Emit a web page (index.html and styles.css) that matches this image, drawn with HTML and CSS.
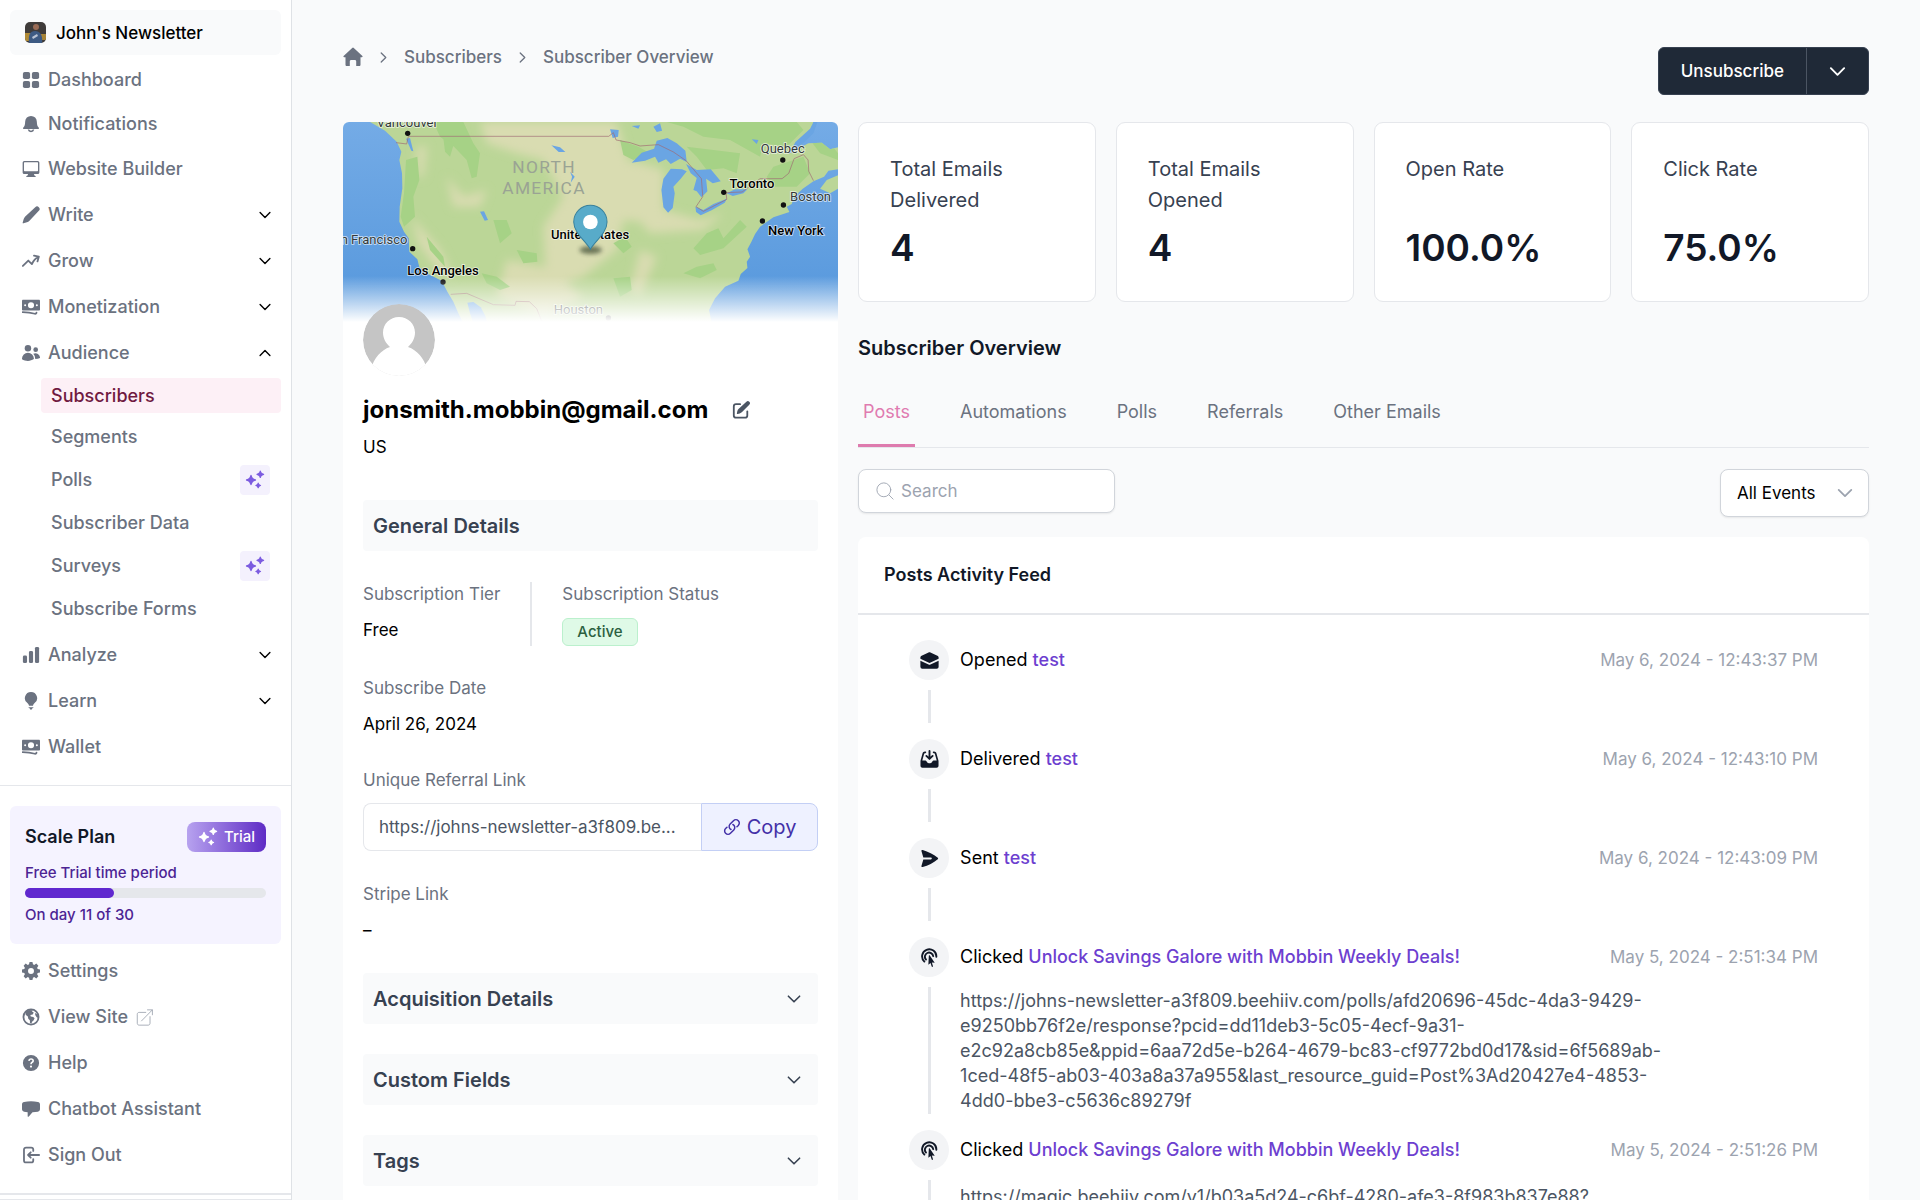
FILE: index.html
```html
<!DOCTYPE html>
<html lang="en">
<head>
    <meta charset="UTF-8">
    <meta name="viewport" content="width=device-width, initial-scale=1.0">
    <title>Subscriber Overview</title>
    <link rel="stylesheet" href="styles.css">
</head>
<body>
    <!-- Icon sprite -->
    <svg class="sprite" aria-hidden="true">
        <symbol id="i-grid" viewBox="0 0 20 20"><rect x="1" y="1" width="8" height="8" rx="2"/><rect x="11" y="1" width="8" height="8" rx="2"/><rect x="1" y="11" width="8" height="8" rx="2"/><rect x="11" y="11" width="8" height="8" rx="2"/></symbol>
        <symbol id="i-bell" viewBox="0 0 20 20"><path d="M10 1a6.500 6.500 0 0 0-6.500 6.500c0 3-.6 5-2 6.300-.7.700-.3 1.700.6 1.700h15.800c.9 0 1.300-1 .6-1.700-1.400-1.300-2-3.300-2-6.300A6.500 6.500 0 0 0 10 1zM6.300 16.200a3.800 3.800 0 0 0 7.400 0h-1.700a2.200 2.200 0 0 1-4 0z"/></symbol>
        <symbol id="i-screen" viewBox="0 0 20 20"><path fill-rule="evenodd" d="M2.500 1h15A1.800 1.800 0 0 1 19.300 2.800v11a1.800 1.800 0 0 1-1.800 1.800h-4.200l.5 1.700c1 .2 1.500.7 1.500 1.700H4.700c0-1 .5-1.500 1.500-1.700l.5-1.700H2.500A1.800 1.800 0 0 1 .7 13.800v-11A1.800 1.800 0 0 1 2.500 1zm.4 1.400a.7.7 0 0 0-.7.700v8.600c0 .4.300.7.700.7h14.200c.4 0 .7-.3.700-.7V3.100a.7.7 0 0 0-.7-.7z"/></symbol>
        <symbol id="i-pen" viewBox="0 0 20 20"><path d="M18.700 1.300a2.800 2.800 0 0 0-4 0L3.600 11.700c-.8.800-1.300 1.700-1.700 2.800L.7 18.500c-.1.500.3.900.8.800l4-1.200c1-.3 2-.9 2.800-1.700L18.700 5.300a2.800 2.800 0 0 0 0-4z"/></symbol>
        <symbol id="i-trend" viewBox="0 0 20 20"><path class="line" d="M1 15.500l6-6 4 4c1.500-3.500 4-6.500 7.500-8M13.300 4l5.400 1.200-1.500 5.300"/></symbol>
        <symbol id="i-cash" viewBox="0 0 20 20"><path fill-rule="evenodd" d="M1.200 2h17.600c.7 0 1.200.5 1.200 1.200v9.600c0 .7-.5 1.200-1.200 1.200H1.200C.5 14 0 13.500 0 12.800V3.200C0 2.500.5 2 1.200 2zM10 4.600a3.400 3.400 0 1 0 0 6.800 3.400 3.400 0 0 0 0-6.800zM3.500 6.900a1.100 1.100 0 1 0 0 2.200 1.100 1.100 0 0 0 0-2.200zm13 0a1.100 1.100 0 1 0 0 2.200 1.100 1.100 0 0 0 0-2.200z"/><path class="line" d="M.7 15.800c5 0 9.300.5 13.700 1.700.9.200 1.700-.4 1.700-1.300"/></symbol>
        <symbol id="i-users" viewBox="0 0 20 20"><circle cx="6.600" cy="4.600" r="3.600"/><circle cx="15.200" cy="6.300" r="2.600"/><path d="M0 16.200a6.600 6.600 0 0 1 13.200 0v.6C11.300 18.200 9 18.800 6.600 18.800S1.900 18.200 0 16.900zM14.700 16.800a8 8 0 0 0-2.200-5.900 5 5 0 0 1 7.500 4.700c-1.500.8-3.300 1.200-5.300 1.200z"/></symbol>
        <symbol id="i-bars" viewBox="0 0 20 20"><rect x="1" y="10.500" width="4.600" height="8.500" rx="1.600"/><rect x="7.700" y="5.500" width="4.600" height="13.500" rx="1.600"/><rect x="14.400" y="1" width="4.600" height="18" rx="1.600"/></symbol>
        <symbol id="i-bulb" viewBox="0 0 20 20"><path d="M10 0a6.800 6.800 0 0 0-4 12.300c1 .8 1.600 1.800 1.800 2.900h4.400c.2-1.100.8-2.100 1.800-2.900A6.800 6.800 0 0 0 10 0zM7.200 17h5.600c0 .5-.6 1-1.300 1.100 0 .9-.7 1.600-1.500 1.600s-1.500-.7-1.500-1.600c-.7-.1-1.300-.6-1.300-1.100z"/></symbol>
        <symbol id="i-gear" viewBox="0 0 20 20"><path fill-rule="evenodd" d="M8.400 0h3.200l.6 2.600 1.400.6 2.300-1.400 2.300 2.300-1.400 2.300.6 1.400 2.600.6v3.200l-2.600.6-.6 1.400 1.400 2.300-2.300 2.300-2.300-1.400-1.400.6-.6 2.600H8.400l-.6-2.600-1.400-.6-2.300 1.400-2.300-2.300 1.400-2.300-.6-1.400L0 11.600V8.400l2.600-.6.6-1.400-1.400-2.300 2.300-2.300 2.300 1.400 1.400-.6zM10 6.700a3.300 3.300 0 1 0 0 6.600 3.300 3.300 0 0 0 0-6.600z"/></symbol>
        <symbol id="i-globe" viewBox="0 0 20 20"><circle class="line" cx="10" cy="10" r="8.400"/><path d="M4 4.200l3.600-2 4.200.3-.5 1.700 1.800.8-1.200 2.200-2.600.6.400 1.600 2.800.5 1.500 1.600-1.200 2.500-1.600 1.200-.8 2.400-1.500-.8-.2-3.300-1.700-1.600-.5-2.500L4 7.500zM14.700 5.200l2.800 2.600.6 3.200-1.800-.8-1.600-2.300z"/></symbol>
        <symbol id="i-help" viewBox="0 0 20 20"><path fill-rule="evenodd" d="M10 1a9 9 0 1 0 0 18 9 9 0 0 0 0-18zM6.800 7.500C7 5.700 8.300 4.700 10.100 4.700c1.900 0 3.200 1.100 3.200 2.700 0 1.400-.9 2-1.600 2.500-.6.400-.8.700-.8 1.500H9.200c0-1.500.5-2.200 1.400-2.800.6-.4.900-.6.900-1.200 0-.7-.6-1.100-1.400-1.100-.9 0-1.400.5-1.500 1.400zM10 12.800a1.200 1.200 0 1 1 0 2.400 1.200 1.200 0 0 1 0-2.400z"/></symbol>
        <symbol id="i-chat" viewBox="0 0 20 20"><path d="M10 1.500c-2.600 0-5.200.2-7.700.6C.9 2.300 0 3.500 0 4.900v5.200c0 1.400.9 2.600 2.300 2.900 1.300.2 2.700.4 4 .5V18c0 .6.600.9 1 .5l4.400-4.900c2-.1 4-.3 6-.6 1.400-.3 2.300-1.500 2.300-2.900V4.900c0-1.400-.9-2.600-2.300-2.800-2.500-.4-5.100-.6-7.700-.6z"/></symbol>
        <symbol id="i-out" viewBox="0 0 20 20"><path class="line" d="M12.500 5.500V4c0-1.300-1-2.300-2.300-2.300H4.500C3.200 1.700 2.200 2.700 2.200 4v12c0 1.300 1 2.300 2.300 2.300h5.700c1.300 0 2.300-1 2.300-2.300v-1.500M19 10H6.700M9.700 7l-3 3 3 3"/></symbol>
        <symbol id="i-external" viewBox="0 0 20 20"><path class="line" d="M11.500 4H3.700C2.400 4 1.500 4.900 1.500 6.200v10.600c0 1.300.9 2.200 2.200 2.200h10.600c1.300 0 2.200-.9 2.200-2.200V9M6.500 14L19.300 1M13.500 1h5.800v5.800"/></symbol>
        <symbol id="i-spark" viewBox="0 0 20 20"><path d="M6 4.700c.4 0 .6.300.7.700.7 2.300 1.400 3.200 3.900 3.900.7.200.7 1.200 0 1.400-2.500.7-3.200 1.600-3.900 3.900-.2.700-1.200.7-1.400 0-.7-2.300-1.400-3.200-3.900-3.900-.7-.2-.7-1.200 0-1.400 2.500-.7 3.200-1.600 3.900-3.900.1-.4.300-.7.700-.7zM15.300.6c.3 0 .6.300.7.600.4 1.400.9 1.900 2.700 2.500.7.200.7 1.100 0 1.300-1.800.6-2.300 1.100-2.700 2.500-.2.700-1.200.7-1.400 0-.4-1.400-.9-1.900-2.700-2.500-.7-.2-.7-1.100 0-1.300 1.800-.6 2.300-1.100 2.700-2.500.1-.3.400-.6.700-.6zM13.200 12.600c.3 0 .5.200.6.500.3 1 .7 1.400 1.900 1.800.6.200.6 1 0 1.200-1.200.4-1.600.8-1.900 1.800-.2.600-1 .6-1.200 0-.3-1-.7-1.400-1.900-1.800-.6-.2-.6-1 0-1.200 1.200-.4 1.600-.8 1.900-1.800.1-.3.300-.5.600-.5z"/></symbol>
        <symbol id="i-down" viewBox="0 0 20 20"><path class="line" d="M3 6.500l7 7 7-7"/></symbol>
        <symbol id="i-up" viewBox="0 0 20 20"><path class="line" d="M3 13.500l7-7 7 7"/></symbol>
        <symbol id="i-right" viewBox="0 0 20 20"><path class="line" d="M6.500 3l7 7-7 7"/></symbol>
        <symbol id="i-home" viewBox="0 0 20 20"><path d="M9.200.9L.6 9c-.5.500-.1 1.200.5 1.200h1.400v7.500c0 .7.500 1.300 1.200 1.300h3.100v-4.500c0-.8.600-1.400 1.400-1.400h3.600c.8 0 1.400.6 1.400 1.400V19h3.100c.7 0 1.200-.6 1.200-1.300v-7.500h1.400c.6 0 1-.7.500-1.200L10.800.9a1.200 1.200 0 0 0-1.600 0z"/></symbol>
        <symbol id="i-edit" viewBox="0 0 20 20"><path class="line" d="M9 3.500H4.500a2.500 2.500 0 0 0-2.500 2.500v10a2.500 2.500 0 0 0 2.500 2.500h10A2.500 2.500 0 0 0 17 16v-4.500"/><path d="M19.200.9a2.200 2.200 0 0 0-3.200 0L7.500 8.700c-.8.700-1.300 1.600-1.600 2.600l-.5 2.300c-.1.600.4 1 .9.900l2.300-.6c1-.3 1.900-.9 2.600-1.600l8-8.200a2.200 2.200 0 0 0 0-3.200z"/></symbol>
        <symbol id="i-link" viewBox="0 0 24 24"><path class="line" d="M13.200 8.700a4.500 4.500 0 0 1 1.200 7.200l-4.500 4.500a4.500 4.500 0 0 1-6.400-6.400l1.800-1.700m13.300-.6l1.800-1.700a4.500 4.500 0 0 0-6.400-6.400L9.500 8.100a4.500 4.500 0 0 0 1.200 7.200"/></symbol>
        <symbol id="i-search" viewBox="0 0 20 20"><path class="line" d="M19 19l-4.600-4.600M16.400 8.700A7.700 7.700 0 1 1 1 8.700a7.700 7.700 0 0 1 15.400 0z"/></symbol>
        <symbol id="i-opened" viewBox="0 0 20 20"><path d="M.4 8.200V6.900c0-.9.500-1.600 1.300-2L9 1.600c.6-.3 1.400-.3 2 0l7.300 3.300c.8.400 1.300 1.100 1.300 2v1.300L10 12.600z"/><path d="M.4 10.200l9.200 4.300c.3.100.5.100.8 0l9.200-4.300v6.300c0 1.200-.9 2.100-2.100 2.100h-15A2.100 2.100 0 0 1 .4 16.500z"/></symbol>
        <symbol id="i-inbox" viewBox="0 0 20 20"><path fill-rule="evenodd" d="M5.700 1.500c.5 0 .9.400.9.900s-.4.900-.9.900h-.5c-.4 0-.7.200-.8.600L2.400 11h2.800c.8 0 1.500.5 1.900 1.200l.2.500c.4.700 1.100 1.200 1.900 1.200h1.600c.8 0 1.500-.5 1.900-1.200l.2-.5c.4-.7 1.100-1.200 1.900-1.200h2.800l-2-7.100c-.1-.4-.4-.6-.8-.6h-.5c-.5 0-.9-.4-.9-.9s.4-.9.900-.9h.5c1.200 0 2.200.8 2.500 1.900l2.100 7.600c.1.300.1.500.1.800v4.700c0 1.200-.9 2.100-2.100 2.100H2.600C1.400 18.600.5 17.700.5 16.500v-4.700c0-.3 0-.5.100-.8l2.100-7.600c.3-1.100 1.300-1.900 2.500-1.900z"/><path class="line" d="M10 1v8M6.700 6.200l3.300 3.200 3.300-3.200"/></symbol>
        <symbol id="i-send" viewBox="0 0 20 20"><path d="M1.500 2.200c-.2-.8.500-1.500 1.300-1.200 6 1.700 11.300 4.400 15.900 8.200.5.400.5 1.200 0 1.600-4.600 3.800-9.900 6.500-15.900 8.200-.8.300-1.500-.4-1.300-1.200L3.500 11h8c1.300 0 1.300-2 0-2h-8z"/></symbol>
        <symbol id="i-click" viewBox="0 0 20 20"><path d="M9.300 8.200c.1-.5.800-.6 1-.2l5.200 7.600-3-.3 1.100 3.700c.2.800-1 1.300-1.300.4l-1.200-3.700-2.300 1.900z"/><path class="line" d="M6.300 12.200a4.400 4.400 0 1 1 7.600-3.600M4.600 14.300a7.500 7.500 0 1 1 12.600-5.100"/></symbol>
    </svg>

    <div class="app">
        <aside class="sidebar">
            <a href="#" class="workspace">
                <svg class="workspace-photo" viewBox="0 0 21 21" aria-hidden="true">
                    <rect width="21" height="21" fill="#3f3b3a"/>
                    <rect y="11" width="6" height="8" fill="#b08a35"/>
                    <rect x="15" y="12" width="6" height="6" fill="#a88437"/>
                    <path d="M4 21c-1-8 1-12 6-12s8 4 7 12z" fill="#3d5a83"/>
                    <circle cx="11" cy="5" r="3" fill="#9a6c56"/>
                    <path d="M7 15l5-3 1 2-5 3z" fill="#b9c3d4"/>
                </svg>
                John's Newsletter
            </a>

            <nav class="nav">
                <a href="#" class="nav-item compact"><svg class="icon"><use href="#i-grid"/></svg>Dashboard</a>
                <a href="#" class="nav-item compact"><svg class="icon"><use href="#i-bell"/></svg>Notifications</a>
                <a href="#" class="nav-item"><svg class="icon"><use href="#i-screen"/></svg>Website Builder</a>
                <button type="button" class="nav-item"><svg class="icon"><use href="#i-pen"/></svg>Write<svg class="chevron"><use href="#i-down"/></svg></button>
                <button type="button" class="nav-item"><svg class="icon"><use href="#i-trend"/></svg>Grow<svg class="chevron"><use href="#i-down"/></svg></button>
                <button type="button" class="nav-item"><svg class="icon"><use href="#i-cash"/></svg>Monetization<svg class="chevron"><use href="#i-down"/></svg></button>
                <button type="button" class="nav-item" aria-expanded="true"><svg class="icon"><use href="#i-users"/></svg>Audience<svg class="chevron"><use href="#i-up"/></svg></button>
                <div class="subnav">
                    <a href="#" class="subnav-item active">Subscribers</a>
                    <a href="#" class="subnav-item">Segments</a>
                    <a href="#" class="subnav-item">Polls<span class="spark"><svg><use href="#i-spark"/></svg></span></a>
                    <a href="#" class="subnav-item">Subscriber Data</a>
                    <a href="#" class="subnav-item">Surveys<span class="spark"><svg><use href="#i-spark"/></svg></span></a>
                    <a href="#" class="subnav-item">Subscribe Forms</a>
                </div>
                <button type="button" class="nav-item"><svg class="icon"><use href="#i-bars"/></svg>Analyze<svg class="chevron"><use href="#i-down"/></svg></button>
                <button type="button" class="nav-item"><svg class="icon"><use href="#i-bulb"/></svg>Learn<svg class="chevron"><use href="#i-down"/></svg></button>
                <a href="#" class="nav-item"><svg class="icon"><use href="#i-cash"/></svg>Wallet</a>
            </nav>

            <div class="sidebar-bottom">
                <div class="plan">
                    <div class="plan-head">
                        <h2>Scale Plan</h2>
                        <span class="trial"><svg><use href="#i-spark"/></svg>Trial</span>
                    </div>
                    <p>Free Trial time period</p>
                    <div class="progress"><div class="progress-fill" style="width: 37%"></div></div>
                    <p>On day 11 of 30</p>
                </div>
                <nav class="nav">
                    <a href="#" class="nav-item"><svg class="icon"><use href="#i-gear"/></svg>Settings</a>
                    <a href="#" class="nav-item"><svg class="icon"><use href="#i-globe"/></svg>View Site<svg class="external"><use href="#i-external"/></svg></a>
                    <a href="#" class="nav-item"><svg class="icon"><use href="#i-help"/></svg>Help</a>
                    <a href="#" class="nav-item"><svg class="icon"><use href="#i-chat"/></svg>Chatbot Assistant</a>
                    <a href="#" class="nav-item"><svg class="icon"><use href="#i-out"/></svg>Sign Out</a>
                </nav>
            </div>
            <div class="sidebar-foot"></div>
        </aside>

        <main class="main">
            <header class="topbar">
                <nav class="breadcrumb" aria-label="Breadcrumb">
                    <a href="#" aria-label="Home"><svg class="home"><use href="#i-home"/></svg></a>
                    <svg class="sep"><use href="#i-right"/></svg>
                    <a href="#">Subscribers</a>
                    <svg class="sep"><use href="#i-right"/></svg>
                    <a href="#">Subscriber Overview</a>
                </nav>
                <div class="split-button">
                    <button type="button" class="split-main">Unsubscribe</button>
                    <button type="button" class="split-toggle" aria-label="More actions"><svg><use href="#i-down"/></svg></button>
                </div>
            </header>

            <div class="columns">
                <section class="profile">
                    <div class="map">
                        <svg viewBox="39 36 1485 600" preserveAspectRatio="xMidYMid slice">
                            <defs>
                                <linearGradient id="sea" x1="0" y1="0" x2="0" y2="1">
                                    <stop offset="0" stop-color="#74abe6"/>
                                    <stop offset="1" stop-color="#5597dc"/>
                                </linearGradient>
                                <filter id="soft" x="-20%" y="-20%" width="140%" height="140%"><feGaussianBlur stdDeviation="14"/></filter>
                                <filter id="shade" x="-50%" y="-50%" width="200%" height="200%"><feGaussianBlur stdDeviation="6"/></filter>
                                <clipPath id="land-clip"><path d="M120 36 165 62 200 95 214 125 208 150 216 190 217 235 209 290 208 335 222 365 236 385 238 425 262 448 268 472 300 495 335 512 352 545 370 575 385 610 400 640H1145L1137 600 1155 565 1185 530 1225 512 1232 492 1252 474 1250 455 1260 440 1252 418 1264 395 1275 372 1290 350 1330 322 1378 306 1370 290 1385 282 1392 260 1418 236 1450 214 1482 200 1495 182 1524 178V112L1500 118 1475 98 1435 100 1412 112 1424 84 1452 60 1450 36Z"/></clipPath>
                            </defs>
                            <rect x="39" y="36" width="1485" height="600" fill="url(#sea)"/>
                            <g clip-path="url(#land-clip)">
                                <rect x="39" y="36" width="1485" height="610" fill="#bbd697"/>
                                <g fill="#d9dcb1" filter="url(#soft)">
                                    <path d="M450 36H860L900 170 960 250 1000 340 880 330 860 420 760 500 650 540 640 350 700 260 640 150 560 130 470 100Z"/>
                                    <path d="M900 150 1000 180 1000 300 1110 330 1180 310 1120 360 960 370 900 300Z"/>
                                    <path d="M245 320 330 420 370 500 330 490 265 400Z"/>
                                    <path d="M350 200 400 260 470 240 450 290 370 290Z"/>
                                    <path d="M530 450 640 470 760 560 640 620 500 560Z"/>
                                    <path d="M260 110 290 110 280 200 262 200Z"/>
                                    <path d="M930 420 980 440 930 560 900 540Z"/>
                                </g>
                                <g fill="#a6d286">
                                    <path d="M228 150 262 140 268 210 250 260 255 320 222 350 212 320 222 250Z"/>
                                    <path d="M310 36 400 36 430 100 450 130 440 200 425 205 410 150 372 110 330 80Z"/>
                                    <path d="M340 85 372 100 360 140 345 125Z"/>
                                    <path d="M1010 36H1400L1420 60 1370 110 1300 100 1290 140 1200 90 1120 80 1060 50Z"/>
                                    <path d="M870 90 925 110 960 130 910 150 880 135Z"/>
                                    <path d="M1070 110 1150 120 1230 130 1220 190 1180 175 1130 180 1100 140Z"/>
                                    <path d="M1330 170 1420 140 1440 190 1400 230 1330 230 1310 200Z"/>
                                    <path d="M1090 415 1130 370 1165 355 1180 385 1230 330 1250 350 1180 415 1110 435Z"/>
                                    <path d="M850 400 885 380 905 410 880 430Z"/>
                                    <path d="M1060 490 1100 470 1150 460 1160 480 1110 505Z"/>
                                    <path d="M850 505 900 500 905 540 870 560Z"/>
                                    <path d="M490 330 530 330 545 370 510 400Z"/>
                                    <path d="M455 490 500 500 540 530 510 540 470 520Z"/>
                                    <path d="M290 380 340 440 345 470 300 420Z"/>
                                    <path d="M560 420 620 430 622 455 580 460Z"/>
                                    <path d="M1440 90 1500 100 1524 130V150L1470 130Z"/>
                                </g>
                            </g>
                            <path d="M1470 236 1490 210 1524 196V236L1500 250Z" fill="#bbd697"/>
                            <!-- lakes and gulfs -->
                            <g fill="#6aa5e3">
                                <path d="M905 158 935 128 972 116 980 92 1012 84 1040 100 1066 122 1070 156 1050 146 1022 162 1008 148 985 158 975 140 945 152Z"/>
                                <path d="M1056 178 1022 176 1000 206 994 240 1000 292 1014 308 1028 294 1034 250 1030 230 1052 206 1070 184Z"/>
                                <path d="M1068 162 1100 180 1142 178 1172 214 1148 220 1128 206 1132 244 1114 262 1100 244 1090 240 1100 204 1082 190Z"/>
                                <path d="M1096 290 1120 300 1150 282 1190 266 1184 278 1146 300 1112 316 1098 306Z"/>
                                <path d="M1190 250 1215 238 1252 238 1240 250 1208 258Z"/>
                                <path d="M840 58 866 60 864 80 848 84ZM970 50 990 40 996 62 980 66ZM450 305 462 304 474 330 464 332ZM664 106 690 112 706 126 686 126ZM1265 88 1285 90 1280 102ZM720 185 734 200 722 218 726 200ZM905 48 930 46 925 56Z"/>
                                <path d="M412 578 430 576 452 592 466 618 472 640H430L420 610Z"/>
                                <path d="M1376 132 1396 96 1440 56 1450 36H1462L1450 70 1400 118Z"/>
                                <path d="M228 86 240 84 250 124 244 122Z"/>
                            </g>
                            <!-- borders -->
                            <g fill="none" stroke="#a06a72" stroke-width="2">
                                <path d="M198 98 230 102 235 79H836L850 68 858 90 900 98 930 108 985 104 1030 126 1068 152 1090 178 1114 206 1118 260 1098 290 1120 304 1190 268 1188 248 1236 246 1290 206H1356L1376 190 1392 146 1420 134 1434 150 1436 184 1450 212"/>
                                <path d="M362 553 410 550 490 584 555 586 558 574 598 575 620 596 636 636"/>
                            </g>
                            <!-- cities -->
                            <g>
                                <circle cx="233" cy="70" r="8"/><circle cx="248" cy="416" r="8"/><circle cx="339" cy="516" r="8"/>
                                <circle cx="1358" cy="150" r="8"/><circle cx="1181" cy="247" r="8"/><circle cx="1360" cy="285" r="8"/>
                                <circle cx="1297" cy="333" r="8"/><circle cx="835" cy="624" r="8"/>
                            </g>
                            <text class="map-region" x="642" y="190">NORTH</text>
                            <text class="map-region" x="642" y="251">AMERICA</text>
                            <text class="map-label" x="232" y="50" text-anchor="middle">Vancouver</text>
                            <text class="map-label" x="1358" y="130" text-anchor="middle">Quebec</text>
                            <text class="map-label strong" x="1198" y="234">Toronto</text>
                            <text class="map-label" x="1380" y="273">Boston</text>
                            <text class="map-label strong" x="1314" y="375">New York</text>
                            <text class="map-label" x="232" y="403" text-anchor="end">San Francisco</text>
                            <text class="map-label strong" x="339" y="496" text-anchor="middle">Los Angeles</text>
                            <text class="map-label strong" x="780" y="386" text-anchor="middle">United States</text>
                            <text class="map-label" x="745" y="611" text-anchor="middle">Houston</text>
                            <!-- marker -->
                            <ellipse cx="782" cy="420" rx="34" ry="12" fill="#33402a" opacity=".65" filter="url(#shade)"/>
                            <path d="M781 418C770 396 731 370 731 336a50 50 0 0 1 100 0c0 34-39 60-50 82z" fill="#58abc9" stroke="#39819c" stroke-width="3"/>
                            <circle cx="781" cy="336" r="22" fill="#fff"/>
                        </svg>
                    </div>

                    <div class="profile-body">
                        <svg class="avatar" viewBox="0 0 72 72" aria-hidden="true">
                            <circle cx="36" cy="36" r="36" fill="#c5c5c5"/>
                            <path d="M36 13c9 0 16 7 16 15.500 0 6-3 11-7 14.500 9 3 16 11 19 22v8H8v-8c3-11 10-19 19-22-4-3.500-7-8.500-7-14.500C20 20 27 13 36 13z" fill="#fff"/>
                        </svg>
                        <div class="email">
                            <h1>jonsmith.mobbin@gmail.com</h1>
                            <button type="button" aria-label="Edit subscriber"><svg><use href="#i-edit"/></svg></button>
                        </div>
                        <p class="country">US</p>

                        <h2 class="section-bar general">General Details</h2>

                        <div class="tier-row">
                            <div class="field tier">
                                <span class="field-label">Subscription Tier</span>
                                <span>Free</span>
                            </div>
                            <div class="field">
                                <span class="field-label">Subscription Status</span>
                                <span class="badge">Active</span>
                            </div>
                        </div>

                        <div class="field">
                            <span class="field-label">Subscribe Date</span>
                            <span>April 26, 2024</span>
                        </div>

                        <div class="referral">
                            <label class="field-label" for="referral">Unique Referral Link</label>
                            <div class="copy-group">
                                <input type="text" id="referral" value="https://johns-newsletter-a3f809.be..." readonly>
                                <button type="button"><svg><use href="#i-link"/></svg>Copy</button>
                            </div>
                        </div>

                        <div class="field">
                            <span class="field-label">Stripe Link</span>
                            <span>–</span>
                        </div>

                        <div class="accordions">
                            <button type="button" class="section-bar">Acquisition Details<svg><use href="#i-down"/></svg></button>
                            <button type="button" class="section-bar">Custom Fields<svg><use href="#i-down"/></svg></button>
                            <button type="button" class="section-bar">Tags<svg><use href="#i-down"/></svg></button>
                        </div>
                    </div>
                </section>

                <section class="overview">
                    <div class="stats">
                        <div class="stat"><h3>Total Emails Delivered</h3><p>4</p></div>
                        <div class="stat"><h3>Total Emails Opened</h3><p>4</p></div>
                        <div class="stat"><h3>Open Rate</h3><p>100.0%</p></div>
                        <div class="stat"><h3>Click Rate</h3><p>75.0%</p></div>
                    </div>

                    <h2 class="overview-title">Subscriber Overview</h2>

                    <nav class="tabs">
                        <a href="#" class="tab active">Posts</a>
                        <a href="#" class="tab">Automations</a>
                        <a href="#" class="tab">Polls</a>
                        <a href="#" class="tab">Referrals</a>
                        <a href="#" class="tab">Other Emails</a>
                    </nav>

                    <div class="filters">
                        <label class="search">
                            <svg><use href="#i-search"/></svg>
                            <input type="search" placeholder="Search" aria-label="Search">
                        </label>
                        <label class="select">
                            <select aria-label="Events">
                                <option>All Events</option>
                            </select>
                            <svg><use href="#i-down"/></svg>
                        </label>
                    </div>

                    <div class="feed">
                        <h3 class="feed-title">Posts Activity Feed</h3>
                        <ul class="feed-list">
                            <li class="event">
                                <span class="event-icon"><svg><use href="#i-opened"/></svg></span>
                                <p>Opened <a href="#">test</a></p>
                                <time>May 6, 2024 - 12:43:37 PM</time>
                                <span class="event-line"></span>
                            </li>
                            <li class="event">
                                <span class="event-icon"><svg><use href="#i-inbox"/></svg></span>
                                <p>Delivered <a href="#">test</a></p>
                                <time>May 6, 2024 - 12:43:10 PM</time>
                                <span class="event-line"></span>
                            </li>
                            <li class="event">
                                <span class="event-icon"><svg><use href="#i-send"/></svg></span>
                                <p>Sent <a href="#">test</a></p>
                                <time>May 6, 2024 - 12:43:09 PM</time>
                                <span class="event-line"></span>
                            </li>
                            <li class="event">
                                <span class="event-icon"><svg><use href="#i-click"/></svg></span>
                                <p>Clicked <a href="#">Unlock Savings Galore with Mobbin Weekly Deals!</a></p>
                                <time>May 5, 2024 - 2:51:34 PM</time>
                                <span class="event-line"></span>
                                <p class="event-url">https://johns-newsletter-a3f809.beehiiv.com/polls/afd20696-45dc-4da3-9429-<wbr>e9250bb76f2e/response?pcid=dd11deb3-5c05-4ecf-9a31-<wbr>e2c92a8cb85e&amp;ppid=6aa72d5e-b264-4679-bc83-cf9772bd0d17&amp;sid=6f5689ab-<wbr>1ced-48f5-ab03-403a8a37a955&amp;last_resource_guid=Post%3Ad20427e4-4853-<wbr>4dd0-bbe3-c5636c89279f</p>
                            </li>
                            <li class="event">
                                <span class="event-icon"><svg><use href="#i-click"/></svg></span>
                                <p>Clicked <a href="#">Unlock Savings Galore with Mobbin Weekly Deals!</a></p>
                                <time>May 5, 2024 - 2:51:26 PM</time>
                                <span class="event-line"></span>
                                <p class="event-url">https://magic.beehiiv.com/v1/b03a5d24-c6bf-4280-afe3-8f983b837e88?</p>
                            </li>
                        </ul>
                    </div>
                </section>
            </div>
        </main>
    </div>
</body>
</html>
```
FILE: styles.css
```css
* {
    margin: 0;
    padding: 0;
    box-sizing: border-box;
}

body {
    background-color: #f9fafb;
    color: #000;
    font-family: Inter, "Liberation Sans", sans-serif;
    font-size: 17px;
    line-height: 24px;
}

a {
    color: inherit;
    text-decoration: none;
}

button, input, select {
    font: inherit;
    color: inherit;
    border: none;
    background: none;
}

button {
    cursor: pointer;
}

svg {
    fill: currentColor;
    flex-shrink: 0;
}

.line {
    fill: none;
    stroke: currentColor;
    stroke-linecap: round;
    stroke-linejoin: round;
}

.sprite {
    display: none;
}

.app {
    display: flex;
    height: 100vh;
    overflow: hidden;
}

/* Sidebar */
.sidebar {
    width: 292px;
    flex-shrink: 0;
    display: flex;
    flex-direction: column;
    background-color: #fff;
    border-right: 1px solid #dfe2e6;
}

.workspace {
    display: flex;
    align-items: center;
    gap: 10px;
    height: 45px;
    margin: 10px 10px 3px;
    padding: 0 15px;
    border-radius: 6px;
    background-color: #f9fafb;
    font-weight: 500;
}

.workspace-photo {
    width: 21px;
    height: 21px;
    border-radius: 5px;
}

.nav {
    display: flex;
    flex-direction: column;
    padding: 0 10px;
}

.nav-item {
    display: flex;
    align-items: center;
    gap: 8px;
    height: 46px;
    padding: 0 9px 0 12px;
    color: #6b7280;
    font-size: 18px;
    font-weight: 500;
    text-align: left;
}

.nav-item.compact {
    height: 44px;
}

.icon {
    width: 18px;
    height: 18px;
    stroke-width: 2px;
}

.chevron {
    width: 14px;
    height: 14px;
    margin-left: auto;
    color: #000;
    stroke-width: 2px;
}

.external {
    width: 17px;
    height: 17px;
    color: #9ca3af;
    stroke-width: 1px;
}

.subnav {
    padding: 2px 0 2px 31px;
}

.subnav-item {
    display: flex;
    align-items: center;
    justify-content: space-between;
    height: 43px;
    padding: 0 11px 0 10px;
    border-radius: 4px;
    color: #6b7280;
    font-size: 18px;
    font-weight: 500;
}

.subnav-item.active {
    height: 35px;
    margin-bottom: 2px;
    background-color: #fdf0f6;
    color: #701a41;
}

.spark {
    display: flex;
    align-items: center;
    justify-content: center;
    width: 30px;
    height: 30px;
    border-radius: 4px;
    background-color: #f4f1fd;
    color: #7c5ce0;
}

.spark svg {
    width: 20px;
    height: 20px;
}

.sidebar-bottom {
    margin-top: 15px;
    padding-top: 20px;
    border-top: 1px solid #e5e7eb;
}

.plan {
    margin: 0 10px 4px;
    padding: 16px 15px;
    height: 138px;
    border-radius: 6px;
    background-color: #f5f3ff;
    color: #4c2494;
    font-size: 15px;
    font-weight: 500;
}

.plan-head {
    display: flex;
    align-items: center;
    justify-content: space-between;
    height: 30px;
    margin-bottom: 9px;
}

.plan-head h2 {
    color: #111827;
    font-size: 18px;
    font-weight: 600;
}

.trial {
    display: flex;
    align-items: center;
    gap: 6px;
    height: 30px;
    padding: 0 11px;
    border-radius: 8px;
    background: linear-gradient(90deg, #b7a2ef, #5e2bc5);
    color: #fff;
}

.trial svg {
    width: 20px;
    height: 20px;
}

.progress {
    height: 10px;
    margin: 3px 0 5px;
    border-radius: 5px;
    background-color: #e5e7eb;
}

.progress-fill {
    height: 100%;
    border-radius: 5px;
    background-color: #6028cf;
}

.sidebar-foot {
    height: 7px;
    margin-top: auto;
    border-top: 2px solid #e5e7eb;
    border-bottom: 1px solid #e5e7eb;
}

/* Main area */
.main {
    flex: 1;
    min-width: 0;
    padding: 47px 51px 0;
    overflow-y: auto;
    scrollbar-width: none;
}

.topbar {
    display: flex;
    justify-content: space-between;
    align-items: flex-start;
    margin-bottom: 27px;
}

.breadcrumb {
    display: flex;
    align-items: center;
    height: 20px;
    color: #6b7280;
    font-weight: 500;
}

.breadcrumb a {
    display: flex;
}

.home {
    width: 20px;
    height: 20px;
}

.sep {
    width: 13px;
    height: 13px;
    margin: 0 14px;
    stroke-width: 2px;
}

.split-button {
    display: flex;
    height: 48px;
    border: 1px solid #374151;
    border-radius: 6px;
    background-color: #1f2937;
    color: #fff;
    font-weight: 500;
}

.split-main {
    padding: 0 22px;
}

.split-toggle {
    display: flex;
    align-items: center;
    justify-content: center;
    width: 62px;
    border-left: 1px solid #4b5563;
}

.split-toggle svg {
    width: 19px;
    height: 19px;
    stroke-width: 2px;
}

.columns {
    display: grid;
    grid-template-columns: 24fr 49fr;
    gap: 20px;
}

/* Profile column */
.profile {
    border-radius: 6px;
    background-color: #fff;
    overflow: hidden;
}

.map {
    position: relative;
    height: 200px;
    overflow: hidden;
}

.map svg {
    display: block;
    width: 100%;
    height: 100%;
    fill: #111;
}

/* fade the map out into the card */
.map::after {
    content: "";
    position: absolute;
    inset: 154px 0 0;
    background: linear-gradient(rgba(255, 255, 255, 0), #fff);
}

.map-label {
    font-family: Roboto, sans-serif;
    font-size: 39px;
    fill: #333a3a;
    stroke: rgba(255, 255, 255, 0.7);
    stroke-width: 5px;
    paint-order: stroke;
}

.map-label.strong {
    font-weight: 500;
    fill: #000;
}

.map-region {
    font-family: Roboto, sans-serif;
    font-size: 52px;
    letter-spacing: 4px;
    text-anchor: middle;
    fill: #9aa394;
}

.profile-body {
    position: relative;
    padding: 0 20px 40px;
}

.avatar {
    display: block;
    width: 72px;
    height: 72px;
    margin-top: -18px;
    border-radius: 50%;
}

.email {
    display: flex;
    align-items: center;
    gap: 24px;
    height: 36px;
    margin-top: 16px;
}

.email h1 {
    font-size: 24px;
    font-weight: 700;
}

.email button {
    display: flex;
    color: #4b5563;
}

.email svg {
    width: 18px;
    height: 18px;
    stroke-width: 2px;
}

.country {
    margin: 7px 0 41px;
}

.section-bar {
    display: flex;
    align-items: center;
    justify-content: space-between;
    width: 100%;
    height: 51px;
    padding: 0 16px 0 10px;
    border-radius: 4px;
    background-color: #f9fafb;
    color: #374151;
    font-size: 20px;
    font-weight: 600;
}

.section-bar svg {
    width: 16px;
    height: 16px;
    stroke-width: 2px;
}

.tier-row {
    display: flex;
    gap: 30px;
    margin: 31px 0 30px;
}

.tier {
    padding-right: 30px;
    border-right: 2px solid #e5e7eb;
}

.field {
    display: flex;
    flex-direction: column;
    align-items: flex-start;
    gap: 12px;
}

.field-label {
    color: #6b7280;
}

.badge {
    height: 28px;
    padding: 0 14px;
    border: 1px solid #bbf0cd;
    border-radius: 6px;
    background-color: #dffae7;
    color: #2c6041;
    font-size: 15px;
    line-height: 26px;
    font-weight: 500;
}

.referral {
    margin: 32px 0 31px;
}

.copy-group {
    display: flex;
    height: 48px;
    margin-top: 11px;
}

.copy-group input {
    flex: 1;
    min-width: 0;
    padding: 0 15px;
    border: 1px solid #e5e7eb;
    border-right: none;
    border-radius: 8px 0 0 8px;
    color: #4b5563;
}

.copy-group button {
    display: flex;
    align-items: center;
    justify-content: center;
    gap: 6px;
    width: 117px;
    border: 1px solid #c3cff5;
    border-radius: 0 8px 8px 0;
    background-color: #eef1ff;
    color: #4330a8;
    font-size: 20px;
}

.copy-group svg {
    width: 18px;
    height: 18px;
    stroke-width: 2px;
}

.accordions {
    display: flex;
    flex-direction: column;
    gap: 30px;
    margin-top: 31px;
}

/* Overview column */
.overview {
    min-width: 0;
}

.stats {
    display: grid;
    grid-template-columns: repeat(4, 1fr);
    gap: 20px;
}

.stat {
    display: flex;
    flex-direction: column;
    justify-content: space-between;
    height: 180px;
    padding: 31px;
    border: 1px solid #e5e7eb;
    border-radius: 9px;
    background-color: #fff;
}

.stat h3 {
    color: #374151;
    font-size: 20px;
    line-height: 31px;
    font-weight: 400;
}

.stat p {
    color: #111827;
    font-size: 37px;
    line-height: 44px;
    font-weight: 600;
}

.overview-title {
    margin: 34px 0 32px;
    color: #111827;
    font-size: 20px;
    font-weight: 600;
}

.tabs {
    display: flex;
    gap: 40px;
    height: 56px;
    border-bottom: 1px solid #e5e7eb;
    color: #6b7280;
    font-size: 18px;
}

.tab {
    padding: 8px 5px 0;
}

.tab.active {
    color: #e07bb0;
    border-bottom: 3px solid #de7bae;
}

.filters {
    display: flex;
    justify-content: space-between;
    align-items: flex-start;
    margin: 21px 0 20px;
}

.search, .select {
    display: flex;
    align-items: center;
    border: 1px solid #d1d5db;
    border-radius: 8px;
    background-color: #fff;
    box-shadow: 0 1px 2px rgba(0, 0, 0, 0.08);
}

.search {
    gap: 7px;
    width: 257px;
    height: 44px;
    padding: 0 17px;
    color: #9ca3af;
}

.search svg {
    width: 18px;
    height: 18px;
    stroke-width: 1px;
}

.search input {
    flex: 1;
    min-width: 0;
    outline: none;
}

.search input::placeholder {
    color: #9ca3af;
    opacity: 1;
}

.select {
    position: relative;
    height: 48px;
}

.select select {
    height: 100%;
    padding: 0 52px 0 16px;
    appearance: none;
}

/* arrow laid over the select box */
.select svg {
    position: absolute;
    right: 14px;
    width: 18px;
    height: 18px;
    color: #9ca3af;
    stroke-width: 2px;
    pointer-events: none;
}

.feed {
    border-radius: 8px;
    background-color: #fff;
}

.feed-title {
    padding: 26px;
    border-bottom: 2px solid #e5e7eb;
    color: #111827;
    font-size: 18px;
    font-weight: 600;
}

.feed-list {
    padding: 25px 51px;
    list-style: none;
}

.event {
    display: grid;
    grid-template-columns: 40px 1fr auto;
    grid-template-rows: 40px minmax(33px, auto);
    gap: 10px 11px;
    align-items: center;
    margin-bottom: 16px;
}

.event p {
    font-size: 18px;
}

.event p a {
    color: #6d3fd0;
    font-weight: 500;
}

.event time {
    color: #9ca3af;
}

.event-icon {
    display: flex;
    align-items: center;
    justify-content: center;
    height: 40px;
    border-radius: 50%;
    background-color: #f3f4f6;
    color: #111827;
}

.event-icon svg {
    width: 19px;
    height: 19px;
    stroke-width: 2px;
}

.event-line {
    align-self: stretch;
    justify-self: center;
    width: 3px;
    background-color: #e5e7eb;
}

.event .event-url {
    grid-column: 2 / 4;
    max-width: 720px;
    padding: 1px 0;
    color: #4b5563;
    line-height: 25px;
}
```
